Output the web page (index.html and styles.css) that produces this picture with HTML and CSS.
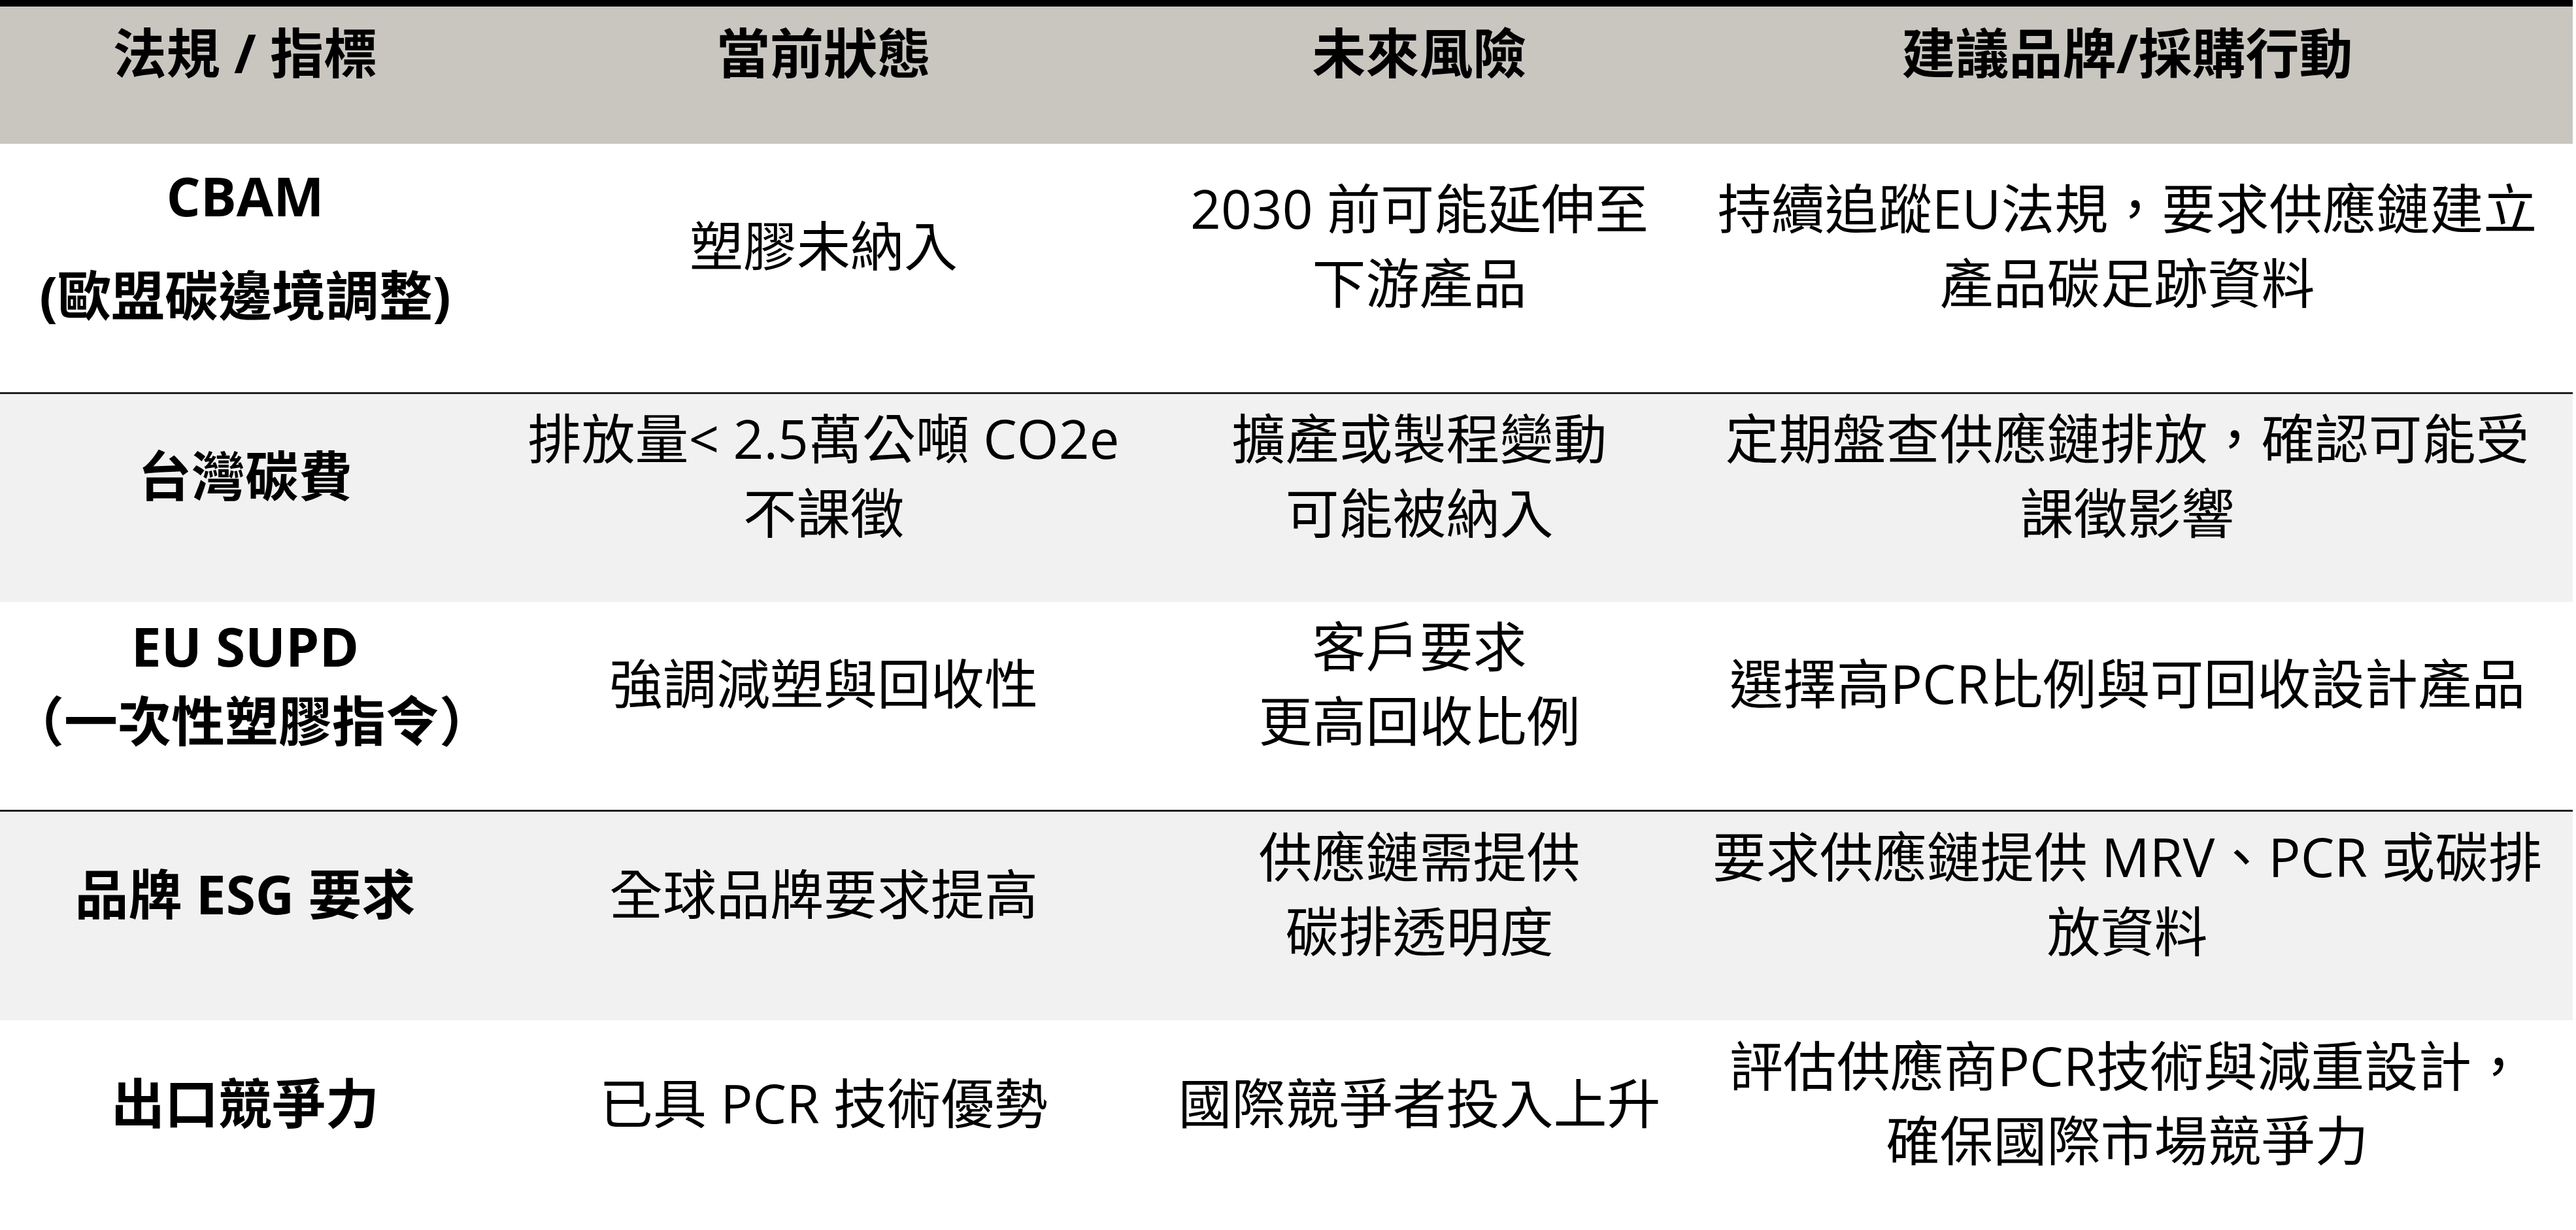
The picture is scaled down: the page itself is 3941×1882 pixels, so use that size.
FILE: index.html
```html
<!DOCTYPE html>
<html lang="zh-Hant">
<head>
<meta charset="utf-8">
<title>法規 / 指標</title>
<link rel="stylesheet" href="styles.css">
</head>
<body>
<table class="reg-table">
  <colgroup>
    <col class="col-law">
    <col class="col-now">
    <col class="col-risk">
    <col class="col-act">
  </colgroup>
  <thead>
    <tr>
      <th>法規 / 指標</th>
      <th>當前狀態</th>
      <th>未來風險</th>
      <th>建議品牌/採購行動</th>
    </tr>
  </thead>
  <tbody>
    <tr class="row row-1 row-white row-lined">
      <td class="name">
        <div>CBAM</div>
        <div class="name-sub">(歐盟碳邊境調整)</div>
      </td>
      <td>塑膠未納入</td>
      <td>2030 前可能延伸至<br>下游產品</td>
      <td>持續追蹤EU法規，要求供應鏈建立<br>產品碳足跡資料</td>
    </tr>
    <tr class="row row-2 row-grey">
      <td class="name">台灣碳費</td>
      <td>排放量&lt; 2.5萬公噸 CO2e<br>不課徵</td>
      <td>擴產或製程變動<br>可能被納入</td>
      <td>定期盤查供應鏈排放，確認可能受<br>課徵影響</td>
    </tr>
    <tr class="row row-3 row-white row-lined">
      <td class="name">EU SUPD<br>（一次性塑膠指令）</td>
      <td>強調減塑與回收性</td>
      <td>客戶要求<br>更高回收比例</td>
      <td>選擇高PCR比例與可回收設計產品</td>
    </tr>
    <tr class="row row-4 row-grey">
      <td class="name">品牌 ESG 要求</td>
      <td>全球品牌要求提高</td>
      <td>供應鏈需提供<br>碳排透明度</td>
      <td>要求供應鏈提供 MRV、PCR 或碳排<br>放資料</td>
    </tr>
    <tr class="row row-5 row-white">
      <td class="name">出口競爭力</td>
      <td>已具 PCR 技術優勢</td>
      <td>國際競爭者投入上升</td>
      <td>評估供應商PCR技術與減重設計，<br>確保國際市場競爭力</td>
    </tr>
  </tbody>
</table>
</body>
</html>
```
FILE: styles.css
```css
html,
body {
  margin: 0;
  padding: 0;
  background: #ffffff;
}

body {
  font-family: "Open Sans", "Noto Sans CJK TC", sans-serif;
  color: #000000;
}

.reg-table {
  width: 3936px;
  table-layout: fixed;
  border-collapse: separate;
  border-spacing: 0;
  border-top: 10px solid #000000;
  font-size: 82px;
  line-height: 114px;
}

.col-law { width: 750px; }
.col-now { width: 1020px; }
.col-risk { width: 803px; }
.col-act { width: 1363px; }

.reg-table th,
.reg-table td {
  box-sizing: border-box;
  padding: 0 16px 70px;
  text-align: center;
  vertical-align: middle;
  white-space: nowrap;
}

.reg-table thead th {
  height: 210px;
  background: #c9c6c0;
  font-weight: 700;
}

.row-white td {
  background: #ffffff;
}

.row-grey td {
  background: #f1f1f1;
}

.row-lined td {
  border-bottom: 3px solid #222222;
}

.row-1 td { height: 383px; }
.row-2 td { height: 318px; }
.row-3 td { height: 321px; }
.row-4 td { height: 319px; }
.row-5 td { height: 321px; }

.reg-table td.name {
  font-weight: 700;
}

.name-sub {
  margin-top: 38px;
}
```
